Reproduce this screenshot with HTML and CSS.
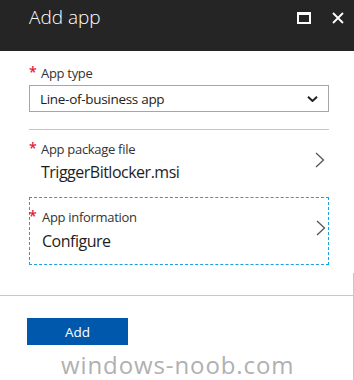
FILE: index.html
```html
<!DOCTYPE html>
<html>
<head>
<meta charset="utf-8">
<link rel="stylesheet" href="styles.css">
</head>
<body>
<div class="blade">
  <header class="header">
    <h1 class="title">Add app</h1>
    <div class="controls">
      <svg class="icon-max" width="14" height="12" viewBox="0 0 14 12"><rect x="1" y="1.5" width="12" height="9.5" fill="none" stroke="#fff" stroke-width="2"/><rect x="0" y="0" width="14" height="3" fill="#fff"/></svg>
      <svg class="icon-close" width="12" height="12" viewBox="0 0 12 12"><path d="M1 1 L11 11 M11 1 L1 11" stroke="#fff" stroke-width="1.8" fill="none"/></svg>
    </div>
  </header>
  <main class="content">
    <div class="field">
      <div class="label"><span class="req">*</span>App type</div>
      <div class="select">
        <span class="select-text">Line-of-business app</span>
        <svg class="select-chev" width="11" height="6" viewBox="0 0 11 6"><path d="M1 0.8 L5.5 5 L10 0.8" stroke="#222" stroke-width="2" fill="none"/></svg>
      </div>
    </div>
    <div class="divider"></div>
    <div class="item">
      <div class="item-text">
        <div class="label"><span class="req">*</span>App package file</div>
        <div class="value">TriggerBitlocker.msi</div>
      </div>
      <svg class="chev" width="10" height="16" viewBox="0 0 10 16"><path d="M1 1 L8.5 8 L1 15" stroke="#555" stroke-width="1.3" fill="none"/></svg>
    </div>
    <div class="item item-focus">
      <div class="item-text">
        <div class="label"><span class="req req-edge">*</span>App information</div>
        <div class="value value-cfg">Configure</div>
      </div>
      <svg class="chev" width="10" height="16" viewBox="0 0 10 16"><path d="M1 1 L8.5 8 L1 15" stroke="#555" stroke-width="1.3" fill="none"/></svg>
    </div>
  </main>
  <footer class="footer">
    <div class="footer-line"></div>
    <button class="btn">Add</button>
    <div class="watermark">windows-noob.com</div>
  </footer>
</div>
</body>
</html>
```
FILE: styles.css
```css
html, body {
  margin: 0;
  padding: 0;
  background: #fff;
  overflow: hidden;
}
body {
  width: 354px;
  height: 380px;
  font-family: "Open Sans", "Noto Sans", sans-serif;
  color: #222;
}
.blade {
  display: flex;
  flex-direction: column;
}
.header {
  height: 51px;
  flex: none;
  background: #252525;
  display: flex;
  justify-content: space-between;
  align-items: flex-start;
  padding: 0 10px 0 29px;
  box-sizing: border-box;
}
.title {
  margin: 0;
  margin-top: 4px;
  font-size: 19px;
  font-weight: 300;
  color: #fff;
  line-height: 26px;
}
.controls {
  display: flex;
  align-items: center;
  gap: 21px;
  margin-top: 11px;
}
.icon-close { margin-top: 1px; }
.content {
  padding: 0 25px 0 29px;
  display: flex;
  flex-direction: column;
}
.field {
  padding-top: 13px;
}
.label {
  position: relative;
  font-size: 13px;
  line-height: 18px;
  color: #333;
  padding-left: 12px;
  letter-spacing: -0.3px;
}
.req {
  position: absolute;
  left: 0;
  top: -1px;
  color: #e0203a;
  font-size: 14px;
  font-weight: 600;
}
.select {
  margin-top: 3px;
  height: 27px;
  border: 1px solid #a6a6a6;
  box-sizing: border-box;
  display: flex;
  align-items: center;
  justify-content: space-between;
  padding: 0 10px 0 10px;
}
.select-text {
  font-size: 13.5px;
  color: #222;
  letter-spacing: -0.3px;
}
.divider {
  margin-top: 17px;
  height: 1px;
  background: #c6c6c6;
  width: 300px;
}
.item {
  display: flex;
  justify-content: space-between;
  align-items: flex-start;
  width: 300px;
  box-sizing: border-box;
  padding: 10px 4px 14px 0;
}
.item-focus {
  border: 1px dashed #1ba1e2;
  padding: 10px 2px 12px 0;
  height: 68px;
}
.req-edge { left: -1px; }
.value {
  font-size: 16px;
  line-height: 22px;
  padding-left: 12px;
  letter-spacing: -0.5px;
  margin-top: 3px;
  color: #1e1e1e;
}
.value-cfg { margin-top: 4px; }
.chev {
  display: block;
  margin-top: 12px;
}
.footer {
  margin-top: 8px;
  border-right: 1px solid #c8c8c8;
  width: 353px;
  height: 87px;
  padding-top: 22px;
  display: flex;
  flex-direction: column;
}
.footer-line {
  height: 1px;
  background: #c8c8c8;
}
.btn {
  margin: 22px 0 0 27px;
  width: 101px;
  height: 27px;
  border: 0;
  background: #0058ad;
  color: #fff;
  font-family: "Open Sans", "Noto Sans", sans-serif;
  font-size: 13.5px;
  padding: 0;
}
.watermark {
  margin-top: 8px;
  padding-left: 61px;
  font-size: 24px;
  line-height: 24px;
  color: #b0b0b0;
  letter-spacing: 0.9px;
}
```
